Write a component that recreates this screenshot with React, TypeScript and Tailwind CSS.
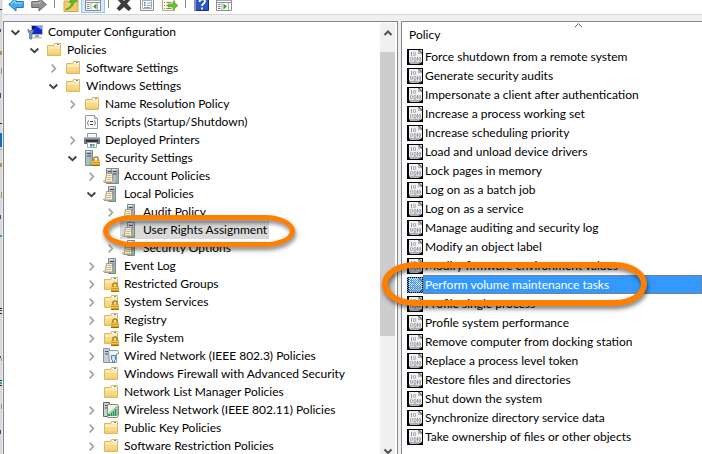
import { useState } from 'react';
import type { ReactNode } from 'react';

type IconName =
  | 'computer'
  | 'folder'
  | 'lockedFolder'
  | 'script'
  | 'printer'
  | 'security'
  | 'policies'
  | 'policy'
  | 'wired'
  | 'wireless';

interface TreeItem {
  label: string;
  icon: IconName;
  state?: 'open' | 'closed';
  children?: TreeItem[];
}

const tree: TreeItem[] = [
  {
    label: 'Computer Configuration',
    icon: 'computer',
    state: 'open',
    children: [
      {
        label: 'Policies',
        icon: 'folder',
        state: 'open',
        children: [
          { label: 'Software Settings', icon: 'folder', state: 'closed' },
          {
            label: 'Windows Settings',
            icon: 'folder',
            state: 'open',
            children: [
              { label: 'Name Resolution Policy', icon: 'folder', state: 'closed' },
              { label: 'Scripts (Startup/Shutdown)', icon: 'script' },
              { label: 'Deployed Printers', icon: 'printer', state: 'closed' },
              {
                label: 'Security Settings',
                icon: 'security',
                state: 'open',
                children: [
                  { label: 'Account Policies', icon: 'policies', state: 'closed' },
                  {
                    label: 'Local Policies',
                    icon: 'policy',
                    state: 'open',
                    children: [
                      { label: 'Audit Policy', icon: 'policy', state: 'closed' },
                      { label: 'User Rights Assignment', icon: 'policy' },
                      { label: 'Security Options', icon: 'policy', state: 'closed' },
                    ],
                  },
                  { label: 'Event Log', icon: 'policy', state: 'closed' },
                  { label: 'Restricted Groups', icon: 'lockedFolder', state: 'closed' },
                  { label: 'System Services', icon: 'lockedFolder', state: 'closed' },
                  { label: 'Registry', icon: 'lockedFolder', state: 'closed' },
                  { label: 'File System', icon: 'lockedFolder', state: 'closed' },
                  { label: 'Wired Network (IEEE 802.3) Policies', icon: 'wired', state: 'closed' },
                  { label: 'Windows Firewall with Advanced Security', icon: 'folder', state: 'closed' },
                  { label: 'Network List Manager Policies', icon: 'folder' },
                  { label: 'Wireless Network (IEEE 802.11) Policies', icon: 'wireless', state: 'closed' },
                  { label: 'Public Key Policies', icon: 'folder', state: 'closed' },
                  { label: 'Software Restriction Policies', icon: 'folder', state: 'closed' },
                ],
              },
            ],
          },
        ],
      },
    ],
  },
];

const policies = [
  'Force shutdown from a remote system',
  'Generate security audits',
  'Impersonate a client after authentication',
  'Increase a process working set',
  'Increase scheduling priority',
  'Load and unload device drivers',
  'Lock pages in memory',
  'Log on as a batch job',
  'Log on as a service',
  'Manage auditing and security log',
  'Modify an object label',
  'Modify firmware environment values',
  'Perform volume maintenance tasks',
  'Profile single process',
  'Profile system performance',
  'Remove computer from docking station',
  'Replace a process level token',
  'Restore files and directories',
  'Shut down the system',
  'Synchronize directory service data',
  'Take ownership of files or other objects',
];

function Svg({ children }: { children: ReactNode }) {
  return (
    <svg viewBox="0 0 16 16" className="block h-4 w-4 shrink-0" aria-hidden="true">
      {children}
    </svg>
  );
}

function FolderShape() {
  return (
    <>
      <path d="M1.5 3.5h6l1-2h6v12h-13z" fill="#f8d987" stroke="#dcb662" />
      <path d="M2 4h6l1-1h5v4H2z" fill="#fce9b0" />
      <path d="M2 11h12v2H2z" fill="#f2cd72" />
      <path d="M9 2h5v1.5H9z" fill="#fff" />
      <path d="M11 2h2v1h-2z" fill="#3f8fe0" />
    </>
  );
}

function LockShape() {
  return (
    <>
      <path d="M9.8 11V9.200a2.200 2.200 0 0 1 4.400 0V11" fill="none" stroke="#a98420" strokeWidth="1.5" />
      <path d="M8 10.500h8V16H8z" fill="#d39a1c" />
      <path d="M8 11h8v1H8zM8 13h8v1H8z" fill="#f2c451" />
      <path d="M8 15h8v1H8z" fill="#9a6c0c" />
    </>
  );
}

function TowerShape({ x = 7 }: { x?: number }) {
  return (
    <g transform={`translate(${x} 0)`}>
      <path d="M.5.5h7v15h-7z" fill="#b5bcc4" stroke="#7d8790" />
      <path d="M1 1h6v1H1z" fill="#e4ebf0" />
      <path d="M2 3h4v1H2zM2 5.500h4v1H2z" fill="#3c4b59" />
      <path d="M5 1h1.500v14H5z" fill="#8d979f" opacity=".5" />
      <path d="M4.500 13h2v2h-2z" fill="#3fe025" />
    </g>
  );
}

function ScrollShape() {
  return (
    <>
      <path d="M3.500 5.500h6v7l-1 2h-7l-1-1.500h2z" fill="#fbf1d4" stroke="#a39a85" />
      <path d="M4.500 7.500h4M4.500 9.500h4M4 11.500h4" stroke="#b5a888" strokeWidth=".8" />
      <path d="M1 13h7v1H1z" fill="#d9c48e" />
    </>
  );
}

function TreeIcon({ name }: { name: IconName }) {
  switch (name) {
    case 'computer':
      return (
        <Svg>
          <path d="M4.500 1.500h11v9h-11z" fill="#1627c8" stroke="#b9bcc0" />
          <path d="M9 2h6v4z" fill="#6f9bff" />
          <path d="M5 2h4L5 8z" fill="#0a1390" />
          <path d="M8 11h4v2H8z" fill="#9ba1a8" />
          <path d="M6 13h9v1.500H6z" fill="#c1c5ca" />
          <path d="M1 5v3l1.500 1.500V15h2.500V9.500L6.500 8V5L5 6.500H2.500z" fill="#7e9ab4" stroke="#4a6178" strokeWidth=".6" />
        </Svg>
      );
    case 'folder':
      return (
        <Svg>
          <FolderShape />
        </Svg>
      );
    case 'lockedFolder':
      return (
        <Svg>
          <FolderShape />
          <LockShape />
        </Svg>
      );
    case 'script':
      return (
        <Svg>
          <path d="M1.500 1.500h9l3 3v10h-12z" fill="#fbfbfb" stroke="#9a9a9a" />
          <path d="M10.500 1.500v3h3" fill="#ddd" stroke="#9a9a9a" />
          <path d="M5 6.500C3 6.500 5 9 3 9c2 0 0 2.500 2 2.500M10 6.500c2 0 0 2.500 2 2.500-2 0 0 2.500-2 2.500" fill="none" stroke="#666" strokeWidth=".8" />
          <path d="M6 7.500h3M6 10.500h3" stroke="#444" />
        </Svg>
      );
    case 'printer':
      return (
        <Svg>
          <path d="M3.500 1.500h9v5h-9z" fill="#f3f5f7" stroke="#8f959b" />
          <path d="M0 5h16v7H0z" fill="#70777e" />
          <path d="M0 5h16v1.500H0z" fill="#b4bac0" />
          <path d="M2 8h12v2H2z" fill="#2e3338" />
          <path d="M3.500 10.500h9v5h-9z" fill="#fff" stroke="#a3a8ad" />
          <path d="M6 12h2v2.500H6z" fill="#2f86d8" />
          <path d="M8.500 12h2v2.500h-2z" fill="#3fa552" />
        </Svg>
      );
    case 'security':
      return (
        <Svg>
          <TowerShape x={1} />
          <LockShape />
        </Svg>
      );
    case 'policies':
      return (
        <Svg>
          <TowerShape x={3} />
          <TowerShape x={8} />
          <ScrollShape />
        </Svg>
      );
    case 'policy':
      return (
        <Svg>
          <TowerShape x={5} />
          <ScrollShape />
        </Svg>
      );
    case 'wired':
      return (
        <Svg>
          <path d="M.5.5h6v14h-6z" fill="#c7ced5" stroke="#8a949e" />
          <path d="M2 3h3v1H2zM2 5.500h3v1H2z" fill="#46535f" />
          <path d="M5.500 2.500h9l1 1.500v2h-2v8.500h-7z" fill="#f1f3f5" stroke="#8e969e" />
          <path d="M8.500 7.500h4v4l-1 1v2h-2v-2l-1-1z" fill="#cfe0f0" stroke="#4f7fb0" />
        </Svg>
      );
    case 'wireless':
      return (
        <Svg>
          <path d="M.5.5h6v14h-6z" fill="#c7ced5" stroke="#5d6a66" />
          <path d="M2 3h3v1H2zM2 5.500h3v1H2z" fill="#2b5a44" />
          <path d="M4.500 2.500h10l1 1.500v9.500l-1 2h-10z" fill="#f4f1e6" stroke="#8e8c80" />
          <path d="M5 12h2v2H5zM7.500 10.500h1.500V14H7.500zM9.500 9H11v5H9.500zM11.500 7H13v7h-1.500zM13.500 5h1v9h-1z" fill="#1e9450" />
          <path d="M4 13 15 3.500" stroke="#7fb795" />
        </Svg>
      );
  }
}

function Chevron({ state }: { state?: 'open' | 'closed' }) {
  if (!state) return <span className="w-3 shrink-0" />;
  return (
    <button className="h-3 w-3 shrink-0" aria-label={state === 'open' ? 'Collapse' : 'Expand'}>
      <svg viewBox="0 0 12 12" className="block h-3 w-3" fill="none" strokeWidth="1.8">
        {state === 'open' ? (
          <path d="M2.500 4.500 6.500 8.200l3.800-3.700" stroke="#404040" />
        ) : (
          <path d="M4.700 2.700 8.300 6.500l-3.600 3.800" stroke="#a6a6a6" />
        )}
      </svg>
    </button>
  );
}

function Highlight({ className }: { className: string }) {
  return (
    <span
      className={`pointer-events-none absolute z-20 border-[#ff8000] drop-shadow-[1px_3px_2px_rgba(0,0,0,0.5)] ${className}`}
    />
  );
}

interface TreeProps {
  items: TreeItem[];
  selected: string;
  onSelect: (label: string) => void;
}

function Tree({ items, selected, onSelect }: TreeProps) {
  return (
    <ul>
      {items.map((item) => (
        <li key={item.label}>
          <div className="flex h-[18px] items-center gap-1">
            <Chevron state={item.state} />
            <button
              onClick={() => onSelect(item.label)}
              className={`relative flex h-[18px] items-center gap-[5px] px-0.5 whitespace-nowrap ${
                item.label === selected ? 'bg-[#d9d9d9]' : ''
              }`}
            >
              <TreeIcon name={item.icon} />
              {item.label}
              {item.label === selected && (
                <Highlight className="-top-1.5 -right-[26px] -bottom-2 -left-[17px] rounded-[30px/16px] border-[5px]" />
              )}
            </button>
          </div>
          {item.children && (
            <div className="pl-[19px]">
              <Tree items={item.children} selected={selected} onSelect={onSelect} />
            </div>
          )}
        </li>
      ))}
    </ul>
  );
}

function PolicyIcon({ selected }: { selected: boolean }) {
  return (
    <Svg>
      <path d="M0 0h16v16H0z" fill="#000" />
      <path d="M2 1h9l4 4v8l-2 1-2-1-2 2-3-1-2 1-2-2z" fill="#f2f2f2" />
      <path d="M11 1v4h4z" fill="#b5b5b5" />
      <path d="M12 1h3v3z" fill="#d8d8d8" />
      <path d="M2 12l3 1 3-1 3 1 3-1v2l-3 1-8 0z" fill="#b0b0b0" />
      <g fill="none" stroke="#8f8fa3" strokeWidth=".9">
        <path d="M4.500 3v4M10.500 8v4" />
        <rect x="6.500" y="3.500" width="2" height="3" rx=".8" />
        <rect x="3.500" y="8.500" width="2" height="3" rx=".8" />
        <rect x="7" y="8.500" width="2" height="3" rx=".8" />
        <rect x="12" y="8.500" width="1.500" height="3" rx=".6" />
      </g>
      {selected && (
        <>
          <defs>
            <pattern id="dither" width="2" height="2" patternUnits="userSpaceOnUse">
              <path d="M0 0h1v1H0zM1 1h1v1H1z" fill="#3399ff" shapeRendering="crispEdges" />
            </pattern>
          </defs>
          <path d="M0 0h16v16H0z" fill="url(#dither)" />
        </>
      )}
    </Svg>
  );
}

function ToolButton({ label, children }: { label: string; children: ReactNode }) {
  return (
    <button aria-label={label} className="shrink-0 pb-px">
      <Svg>{children}</Svg>
    </button>
  );
}

function Separator() {
  return <span className="h-3 w-px shrink-0 self-start bg-[#8d8d8d]" />;
}

function PaneWindow({ arrow }: { arrow: string }) {
  return (
    <>
      <path d="M.5 1.500h15v13H.5z" fill="#fff" stroke="#8a8f96" />
      <path d="M1 2h14v3H1z" fill="#a3abb5" />
      <path d="M1 6.500h14" stroke="#8a8f96" />
      <path d="M2 8.500h2.500M2 10.500h2.500M2 12.500h2.500" stroke="#7b828b" />
      <path d="M6 7v7M12.500 7v7" stroke="#a9afb6" />
      <path d={arrow} fill="#37a31f" />
    </>
  );
}

function Toolbar() {
  return (
    <div role="toolbar" className="flex h-[15px] shrink-0 items-end overflow-hidden border-b border-[#d4d4d4] bg-white pb-px pl-[5px]">
      <div className="flex items-end gap-[7px]">
        <ToolButton label="Back">
          <path d="M.7 8.500 8 2v3.500h7.300v6H8V15z" fill="#45aeea" stroke="#2277b5" />
          <path d="M3 8 7 4.500V7h7.500" stroke="#a5dcfa" fill="none" />
        </ToolButton>
        <ToolButton label="Forward">
          <path d="M15.300 8.500 8 2v3.500H.7v6H8V15z" fill="#929292" stroke="#686868" />
          <path d="M1.500 7H9V4.500" stroke="#c2c2c2" fill="none" />
        </ToolButton>
        <Separator />
      </div>
      <div className="flex items-end pl-2">
        <ToolButton label="Up">
          <path d="M1 5h6l1-1h7v11.500H1z" fill="#f0cd6c" stroke="#cfa548" />
          <path d="M3 13c3-1 5-3 6-7l-3 .5L11 0l3 6-2.500-.5C10.500 10 7 13 3 14z" fill="#55bf2c" stroke="#338d14" strokeWidth=".5" />
        </ToolButton>
        <button
          aria-label="Show/Hide Console Tree"
          aria-pressed="true"
          className="ml-0.5 shrink-0 border border-[#8fcaf2] bg-[#d5ebfa] px-[3px]"
        >
          <Svg>
            <PaneWindow arrow="M11.500 7.500v6L8 10.500z" />
          </Svg>
        </button>
      </div>
      <div className="flex items-end gap-[7px] pl-[3px]">
        <Separator />
        <ToolButton label="Delete">
          <path d="M1 3 4 1l4 4 4-4 3 2-4 4.500 4.500 5-3 2.500L8 11l-4.500 4-3-2.500L5 7.500z" fill="#3b3b3b" />
        </ToolButton>
        <ToolButton label="Properties">
          <path d="M1.500.5h13v14h-13z" fill="#fbfbfc" stroke="#8a8f96" />
          <path d="M3.500 4.500h9v8h-9z" fill="#fff" stroke="#a5abb3" />
          <path d="M5 6h1.500v1.500H5zM5 8.500h1.500V10H5z" fill="#3578c6" />
          <path d="M8 7h4M8 9.500h4M5 11.500h6" stroke="#969ca4" />
        </ToolButton>
        <ToolButton label="Export List">
          <path d="M.5.5h12v14H.5z" fill="#fdf8e4" stroke="#b9ad86" />
          <path d="M2 6.500h1M2 9.500h1M2 12.500h1M4.500 6.500h5M4.500 9.500h3M4.500 12.500h5" stroke="#808080" />
          <path d="M6 8h5V5l5 4.500-5 4.500v-3H6z" fill="#65c431" stroke="#419b18" strokeWidth=".5" />
        </ToolButton>
        <Separator />
        <ToolButton label="Help">
          <path d="M2.500.5h13v14h-13z" fill="#2e55c4" stroke="#17307f" />
          <path d="M1 0h2v15H1z" fill="#8495bd" />
          <path d="M6.500 6c0-3.500 5.500-3.500 5.500-.5 0 2-3 2-3 4.500M9 11.500v2" fill="none" stroke="#fff" strokeWidth="1.800" />
        </ToolButton>
        <ToolButton label="Show/Hide Action Pane">
          <PaneWindow arrow="M7.500 7.500v6l3.500-3z" />
        </ToolButton>
      </div>
    </div>
  );
}

// sliver of the window that sits behind this one
function BackgroundEdge() {
  return (
    <svg className="h-full w-[3px] shrink-0 bg-[#d9d9d9]" shapeRendering="crispEdges" aria-hidden="true">
      <path d="M2 0h1v900H2z" fill="#e9e9e9" />
      <path d="M0 133h2v14H0z" fill="#0e6fc4" />
      <path d="M0 149h2v1H0z" fill="#67b4e8" />
      <path d="M0 9h2v1H0zM0 123h2v1H0zM0 308h2v1H0zM0 313h2v1H0zM0 380h2v1H0zM0 385h2v1H0z" fill="#2c211d" />
      <path d="M0 29h1v3H0zM0 93h1v5H0zM0 215h1v4H0zM0 310h2v1H0zM0 356h1v2H0zM0 430h1v4H0z" fill="#2857a3" />
      <path d="M0 51h2v4H0zM1 68h1v6H1zM0 163h2v4H0zM1 192h1v6H1zM1 358h1v3H1zM1 404h1v5H1z" fill="#bc8b56" />
      <path d="M0 235h2v2H0zM0 382h2v2H0z" fill="#3a9db5" />
    </svg>
  );
}

function ScrollBar() {
  return (
    <div className="mt-px mr-0.5 flex w-[15px] shrink-0 flex-col bg-[#f0f0f0]">
      <button aria-label="Scroll up" className="flex h-[29px] shrink-0 justify-center pt-1.5">
        <svg viewBox="0 0 10 8" className="h-2 w-2.5" fill="none">
          <path d="M1.500 6 5 2.500 8.500 6" stroke="#505050" strokeWidth="2" />
        </svg>
      </button>
      <div className="grow-[284] bg-[#cdcdcd]" />
      <div className="grow-[112]" />
      <button aria-label="Scroll down" className="flex h-1.5 shrink-0 justify-center">
        <svg viewBox="0 0 10 8" className="h-2 w-2.5 shrink-0" fill="none">
          <path d="M1.500 1.500 5 5l3.500-3.500" stroke="#505050" strokeWidth="2" />
        </svg>
      </button>
    </div>
  );
}

export default function App() {
  const [node, setNode] = useState('User Rights Assignment');
  const [policy, setPolicy] = useState('Perform volume maintenance tasks');

  return (
    <div className="flex h-screen overflow-hidden bg-[#f0f0f0] font-['Lato','Open_Sans',sans-serif] text-[12px] leading-[18px] text-black">
      <BackgroundEdge />
      <div className="flex min-w-0 flex-1 flex-col gap-1.5">
        <Toolbar />
        <div className="flex min-h-0 flex-1">
          <nav className="flex w-[395px] shrink-0 border-x border-t border-[#828790] bg-white">
            <div className="min-w-0 flex-1 pt-px pl-[5px]">
              <Tree items={tree} selected={node} onSelect={setNode} />
            </div>
            <ScrollBar />
          </nav>
          <main className="ml-[3px] min-w-0 flex-1 border-t border-l border-[#828790] bg-white">
            <table className="w-full border-collapse">
              <thead>
                <tr className="h-[25px]">
                  <th scope="col" aria-sort="ascending" className="relative p-0 pl-[7px] text-left font-normal">
                    Policy
                    <svg viewBox="0 0 9 5" className="absolute top-px left-[172px] h-[5px] w-[9px]" fill="none">
                      <path d="M.8 4.300 4.500.7l3.700 3.600" stroke="#606060" />
                    </svg>
                  </th>
                </tr>
              </thead>
              <tbody>
                {policies.map((name) => (
                  <tr key={name} onClick={() => setPolicy(name)} aria-selected={name === policy}>
                    <td className="p-0">
                      <div className="relative flex h-[19px] items-center pl-[5px]">
                        <PolicyIcon selected={name === policy} />
                        <span
                          className={`flex h-[19px] flex-1 items-center border border-dotted pl-px whitespace-nowrap ${
                            name === policy ? 'border-[#cc6600] bg-[#3399ff] text-white' : 'border-transparent'
                          }`}
                        >
                          {name}
                        </span>
                        {name === policy && (
                          <Highlight className="-top-[13px] -bottom-3 -left-5 w-[265px] rounded-[32px/22px] border-[6px]" />
                        )}
                      </div>
                    </td>
                  </tr>
                ))}
              </tbody>
            </table>
          </main>
        </div>
      </div>
    </div>
  );
}
